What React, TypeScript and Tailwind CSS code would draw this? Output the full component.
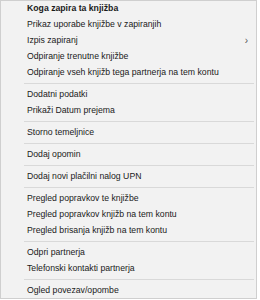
import React from 'react';

type Entry = { label: string; bold?: boolean; sub?: boolean } | 'sep';

const entries: Entry[] = [
  { label: 'Koga zapira ta knjižba', bold: true },
  { label: 'Prikaz uporabe knjižbe v zapiranjih' },
  { label: 'Izpis zapiranj', sub: true },
  { label: 'Odpiranje trenutne knjižbe' },
  { label: 'Odpiranje vseh knjižb tega partnerja na tem kontu' },
  'sep',
  { label: 'Dodatni podatki' },
  { label: 'Prikaži Datum prejema' },
  'sep',
  { label: 'Storno temeljnice' },
  'sep',
  { label: 'Dodaj opomin' },
  'sep',
  { label: 'Dodaj novi plačilni nalog UPN' },
  'sep',
  { label: 'Pregled popravkov te knjižbe' },
  { label: 'Pregled popravkov knjižb na tem kontu' },
  { label: 'Pregled brisanja knjižb na tem kontu' },
  'sep',
  { label: 'Odpri partnerja' },
  { label: 'Telefonski kontakti partnerja' },
  'sep',
  { label: 'Ogled povezav/opombe' },
];

export default function App() {
  return (
    <div className="w-[260px] h-[300px] bg-white">
      <div
        className="w-[257px] h-[299px] bg-[#f2f2f2] border border-[#cfcfcf] flex flex-col text-[8.7px] text-[#1a1a1a]"
        style={{ fontFamily: '"Liberation Sans", Arial, sans-serif' }}
      >
        {entries.map((e, i) =>
          e === 'sep' ? (
            <div key={i} className="h-[6px] flex items-center pl-[23px] pr-[2px]">
              <div className="h-px w-full bg-[#d9d9d9]" />
            </div>
          ) : (
            <div key={i} className="h-[16px] flex items-center pl-[26px] pr-[8px] whitespace-nowrap">
              <span className={e.bold ? 'font-bold flex-1' : 'flex-1'}>{e.label}</span>
              {e.sub && <span className="text-[10px] text-[#555]">›</span>}
            </div>
          )
        )}
      </div>
    </div>
  );
}
